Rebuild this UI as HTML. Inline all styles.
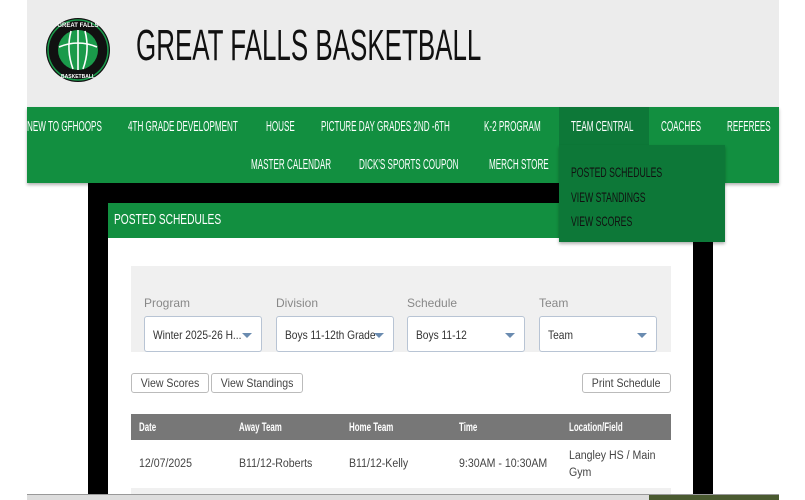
<!DOCTYPE html>
<html><head><meta charset="utf-8"><style>
*{margin:0;padding:0;box-sizing:border-box}
body{width:805px;height:500px;overflow:hidden;background:#fff;position:relative;font-family:"Liberation Sans",sans-serif}
.a{position:absolute}
.c{white-space:nowrap;transform-origin:0 0}
.nav span{position:absolute;color:#fff;font-size:15px;white-space:nowrap;transform:scaleX(0.54);transform-origin:0 0}
.sel{position:absolute;top:316px;width:118px;height:36px;background:#fff;border:1px solid #b8c4d4;border-radius:3px;font-size:12px;color:#333;padding:11px 8px;white-space:nowrap;overflow:hidden}
.sel span{display:inline-block;transform:scaleX(0.85);transform-origin:0 0}
.sel:after{content:"";position:absolute;right:9px;top:16px;border-left:5px solid transparent;border-right:5px solid transparent;border-top:5px solid #6a8bb0}
.lbl{position:absolute;top:296px;font-size:12px;color:#888}
.btn{position:absolute;top:373px;height:20px;border:1px solid #bbb;border-radius:3px;background:#fff;font-size:12px;color:#444;line-height:18px;white-space:nowrap}
.btn span{display:inline-block;transform:scaleX(0.88);transform-origin:0 0;padding-left:10px}
.th{position:absolute;top:420px;color:#fff;font-size:12px;font-weight:bold;transform:scaleX(0.66);transform-origin:0 0;white-space:nowrap}
.td{position:absolute;font-size:11.5px;color:#444;line-height:17px;white-space:nowrap;transform:scaleX(0.92);transform-origin:0 0}
</style></head><body>
<div class="a" style="left:27px;top:0;width:752px;height:107px;background:#ececec"></div>
<svg class="a" style="left:44px;top:17px" width="68" height="66" viewBox="0 0 68 66">
<circle cx="34" cy="33" r="32" fill="#111"/><circle cx="34" cy="33" r="30" fill="none" stroke="#1a9a4a" stroke-width="1.5"/>
<circle cx="34" cy="33" r="20" fill="#1a9a4a"/>
<path d="M15 30 Q34 22 53 30 M27 14 Q22 33 29 52 M41 14 Q46 33 39 52 M34 13 V53" stroke="#fff" stroke-width="1.6" fill="none"/>
<text x="34" y="10" fill="#fff" font-size="6" text-anchor="middle" font-family="Liberation Sans" font-weight="bold">GREAT FALLS</text>
<text x="34" y="61" fill="#fff" font-size="5" text-anchor="middle" font-family="Liberation Sans" font-weight="bold">BASKETBALL</text>
</svg>
<div class="a c" style="left:136px;top:24px;font-size:44px;line-height:44px;color:#111;transform:scaleX(0.59)">GREAT FALLS BASKETBALL</div>
<div class="a" style="left:27px;top:107px;width:752px;height:76px;background:#128f40;box-shadow:0 2px 3px rgba(0,0,0,.3)"></div>
<div class="a" style="left:559px;top:107px;width:90px;height:38px;background:#0d7838"></div>
<div class="nav">
<span style="left:27px;top:118px">NEW TO GFHOOPS</span>
<span style="left:128px;top:118px">4TH GRADE DEVELOPMENT</span>
<span style="left:266px;top:118px">HOUSE</span>
<span style="left:321px;top:118px">PICTURE DAY GRADES 2ND -6TH</span>
<span style="left:484px;top:118px">K-2 PROGRAM</span>
<span style="left:571px;top:118px">TEAM CENTRAL</span>
<span style="left:661px;top:118px">COACHES</span>
<span style="left:727px;top:118px">REFEREES</span>
<span style="left:251px;top:156px">MASTER CALENDAR</span>
<span style="left:359px;top:156px">DICK'S SPORTS COUPON</span>
<span style="left:489px;top:156px">MERCH STORE</span>
</div>
<div class="a" style="left:88px;top:183px;width:625px;height:317px;background:#000"></div>
<div class="a" style="left:108px;top:203px;width:585px;height:297px;background:#fff"></div>
<div class="a" style="left:108px;top:203px;width:585px;height:35px;background:#128f40"></div>
<div class="a c" style="left:114px;top:211px;color:#fff;font-size:15px;transform:scaleX(0.68)">POSTED SCHEDULES</div>
<div class="a" style="left:559px;top:145px;width:166px;height:97px;background:#0d7838;box-shadow:0 2px 3px rgba(0,0,0,.3)"></div>
<div class="a c" style="left:571px;top:160px;font-size:14px;color:#111;line-height:24.5px;transform:scaleX(0.62)">POSTED SCHEDULES<br>VIEW STANDINGS<br>VIEW SCORES</div>
<div class="a" style="left:131px;top:266px;width:540px;height:86px;background:#f0f0f0"></div>
<div class="lbl" style="left:144px">Program</div><div class="lbl" style="left:276px">Division</div><div class="lbl" style="left:407px">Schedule</div><div class="lbl" style="left:539px">Team</div>
<div class="sel" style="left:144px"><span>Winter 2025-26 H...</span></div>
<div class="sel" style="left:276px"><span>Boys 11-12th Grade</span></div>
<div class="sel" style="left:407px"><span>Boys 11-12</span></div>
<div class="sel" style="left:539px"><span>Team</span></div>
<div class="btn" style="left:131px;width:78px"><span>View Scores</span></div>
<div class="btn" style="left:211px;width:92px"><span>View Standings</span></div>
<div class="btn" style="left:582px;width:89px"><span>Print Schedule</span></div>
<div class="a" style="left:131px;top:414px;width:540px;height:26px;background:#777"></div>
<div class="th" style="left:139px">Date</div><div class="th" style="left:239px">Away Team</div><div class="th" style="left:349px">Home Team</div><div class="th" style="left:459px">Time</div><div class="th" style="left:569px">Location/Field</div>
<div class="td" style="left:139px;top:456px">12/07/2025</div>
<div class="td" style="left:239px;top:456px">B11/12-Roberts</div>
<div class="td" style="left:349px;top:456px">B11/12-Kelly</div>
<div class="td" style="left:459px;top:456px">9:30AM - 10:30AM</div>
<div class="td" style="left:569px;top:448px">Langley HS / Main<br>Gym</div>
<div class="a" style="left:131px;top:488px;width:540px;height:12px;background:#f0f0f0"></div>
<div class="a" style="left:27px;top:494px;width:752px;height:6px;background:#ddd;border-top:1px solid #999"></div>
<div class="a" style="left:649px;top:495px;width:130px;height:5px;background:#4a5a30"></div>
</body></html>
